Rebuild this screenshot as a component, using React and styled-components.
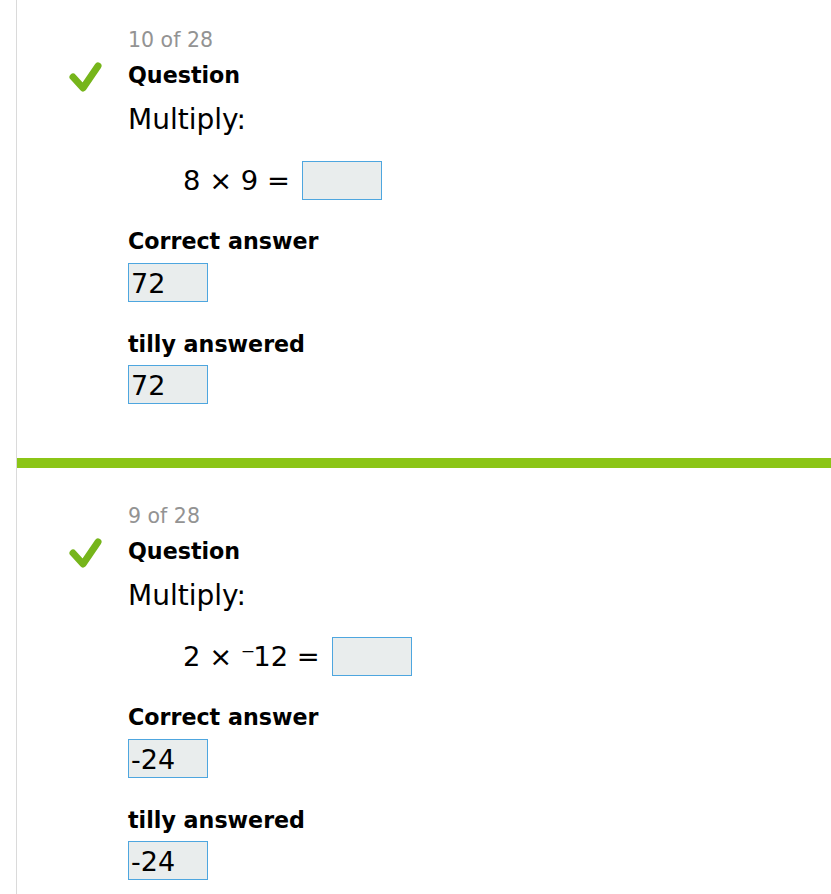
import React from 'react';
import styled, { createGlobalStyle } from 'styled-components';

const GlobalStyle = createGlobalStyle`
  html, body {
    margin: 0;
    padding: 0;
    background: #fff;
  }
  body {
    font-family: "DejaVu Sans", Verdana, sans-serif;
    color: #000;
  }
`;

const Page = styled.div`
  margin-left: 16px;
  border-left: 1px solid #dadada;
  min-height: 100vh;
`;

const Section = styled.section`
  display: grid;
  grid-template-columns: 111px 1fr;
  padding-top: ${(p) => (p.$first ? 28 : 36)}px;
  padding-bottom: 54px;
`;

const Counter = styled.div`
  grid-column: 2;
  font-size: 20.5px;
  line-height: 24px;
  color: #939393;
`;

const CheckWrap = styled.div`
  grid-column: 1;
  justify-self: end;
  margin-right: 25px;
  margin-top: 8px;
  width: 36px;
  height: 36px;
`;

const Body = styled.div`
  grid-column: 2;
  padding-top: 10px;
`;

const Label = styled.div`
  font-size: 22.2px;
  line-height: 26px;
  font-weight: bold;
  margin-top: ${(p) => p.$top || 0}px;
`;

const Prompt = styled.div`
  font-size: 28px;
  line-height: 32px;
  margin-top: 16px;
`;

const Equation = styled.div`
  display: flex;
  align-items: center;
  margin-top: 25px;
  padding-left: 55px;
  font-size: 27.4px;
  line-height: 32px;
  white-space: pre;
`;

const Neg = styled.span`
  letter-spacing: -2px;
`;

const Box = styled.div`
  box-sizing: border-box;
  width: 80px;
  height: 39px;
  border: 1px solid #4ea6df;
  background: #e9eded;
  margin-left: ${(p) => p.$gap || 0}px;
  margin-top: ${(p) => p.$top || 0}px;
  padding: 3px 0 0 2px;
  font-size: 27px;
  line-height: 33px;
`;

const Divider = styled.div`
  height: 10px;
  background: #8bc516;
`;

const Check = () => (
  <svg width="36" height="36" viewBox="0 0 36 36">
    <polyline
      points="6,17 16,28 31,6"
      fill="none"
      stroke="#76b51b"
      strokeWidth="7"
      strokeLinecap="round"
      strokeLinejoin="round"
    />
  </svg>
);

const questions = [
  { n: 10, expr: <>8 × 9 =</>, answer: '72', given: '72' },
  { n: 9, expr: <>2 × <Neg>⁻</Neg>12 =</>, answer: '-24', given: '-24' },
];

const App = () => {
  return (
    <>
      <GlobalStyle />
      <Page>
        {questions.map((q, i) => (
          <React.Fragment key={q.n}>
            <Section $first={i === 0}>
              <Counter>{q.n} of 28</Counter>
              <CheckWrap>
                <Check />
              </CheckWrap>
              <Body>
                <Label>Question</Label>
                <Prompt>Multiply:</Prompt>
                <Equation>
                  <span>{q.expr}</span>
                  <Box $gap={12} />
                </Equation>
                <Label $top={28}>Correct answer</Label>
                <Box $top={9}>{q.answer}</Box>
                <Label $top={29}>tilly answered</Label>
                <Box $top={8}>{q.given}</Box>
              </Body>
            </Section>
            <Divider />
          </React.Fragment>
        ))}
      </Page>
    </>
  );
};

export default App;
